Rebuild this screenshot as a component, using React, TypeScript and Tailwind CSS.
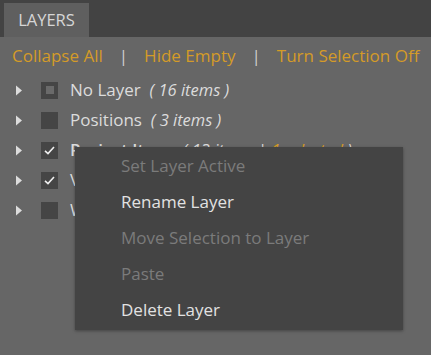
import React from "react";

const font = { fontFamily: '"Open Sans", "Noto Sans", sans-serif' };

function Tri() {
  return (
    <svg width="8" height="11" viewBox="0 0 8 11" className="shrink-0">
      <path d="M1 0.5 L7 5.5 L1 10.5 Z" fill="#dcdcdc" />
    </svg>
  );
}

function Box({ state }: { state: "ind" | "on" | "off" }) {
  return (
    <div className="w-[17px] h-[17px] bg-[#454545] flex items-center justify-center shrink-0">
      {state === "ind" && <div className="w-[8px] h-[8px] bg-[#6a6a6a]" />}
      {state === "on" && (
        <svg width="13" height="13" viewBox="0 0 13 13">
          <path d="M2 6.8 L5 9.6 L11 3" stroke="#f0f0f0" strokeWidth="1.6" fill="none" />
        </svg>
      )}
    </div>
  );
}

function Row({ state, children }: { state: "ind" | "on" | "off"; children: React.ReactNode }) {
  return (
    <div className="h-[30px] flex items-center pl-[15px]">
      <Tri />
      <div className="w-[18px]" />
      <Box state={state} />
      <div className="w-[12px]" />
      <div className="text-[17px] text-[#dcdcdc] whitespace-nowrap">{children}</div>
    </div>
  );
}

export default function App() {
  return (
    <div className="w-[431px] h-[355px] bg-[#666666] relative overflow-hidden" style={font}>
      <div className="h-[37px] bg-[#434343] flex items-end pl-[4px]">
        <div className="h-[34px] w-[85px] bg-[#5f5f5f] flex items-center justify-center text-[16.5px] text-[#d6d6d6]">
          LAYERS
        </div>
      </div>
      <div className="h-[38px] flex items-center pl-[12px] text-[17px] text-[#d49b28] whitespace-nowrap">
        <span>Collapse All</span>
        <span className="text-[#d0d0d0] mx-[16px]">|</span>
        <span>Hide Empty</span>
        <span className="text-[#d0d0d0] mx-[16px]">|</span>
        <span>Turn Selection Off</span>
      </div>
      <div>
        <Row state="ind">
          No Layer <span className="italic text-[16.5px]">&nbsp;( 16 items )</span>
        </Row>
        <Row state="off">
          Positions <span className="italic text-[16.5px]">&nbsp;( 3 items )</span>
        </Row>
        <Row state="on">
          <span className="font-semibold">Project Items</span>
          <span className="italic text-[16.5px]">&nbsp;( 13 items | </span>
          <span className="italic text-[16.5px] text-[#d49b28]">1 selected</span>
          <span className="italic text-[16.5px]"> )</span>
        </Row>
        <Row state="on">
          Venues <span className="italic text-[16.5px]">&nbsp;( 4 items )</span>
        </Row>
        <Row state="off">
          Walls <span className="italic text-[16.5px]">&nbsp;( 2 items )</span>
        </Row>
      </div>
      <div className="absolute left-[75px] top-[147px] w-[328px] h-[183px] bg-[#444444] shadow-[0_1px_3px_rgba(0,0,0,0.35)] flex flex-col pt-[1px] text-[17px]">
        <div className="h-[36px] flex items-center pl-[46px] text-[#7b7b7b]">Set Layer Active</div>
        <div className="h-[36px] flex items-center pl-[46px] text-[#e2e2e2]">Rename Layer</div>
        <div className="h-[36px] flex items-center pl-[46px] text-[#7b7b7b]">Move Selection to Layer</div>
        <div className="h-[36px] flex items-center pl-[46px] text-[#7b7b7b]">Paste</div>
        <div className="h-[36px] flex items-center pl-[46px] text-[#e2e2e2]">Delete Layer</div>
      </div>
    </div>
  );
}
